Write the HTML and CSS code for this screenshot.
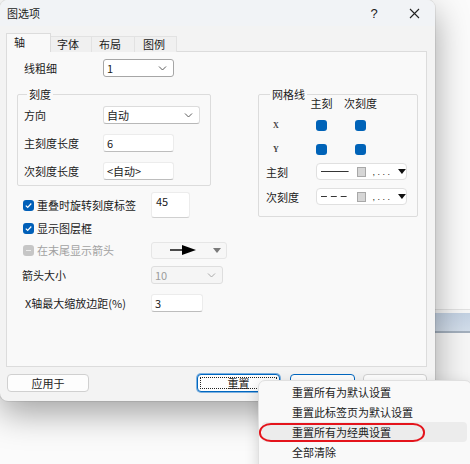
FILE: index.html
```html
<!doctype html>
<html lang="zh-CN">
<head>
	<meta charset="UTF-8">
	<title>图选项</title>
	<link rel="stylesheet" href="styles.css">
</head>
<body>
	<div class="desk">
		<!-- window behind the dialog -->
		<div class="backwin">
			<div class="backwin-bar"></div>
		</div>

		<div class="dialog">
			<div class="titlebar">
				<span class="title">图选项</span>
				<span class="help">?</span>
				<span class="close">
					<svg width="11" height="11" viewBox="0 0 11 11"><path d="M1 1L10 10M10 1L1 10" stroke="#222" stroke-width="1.1" fill="none"/></svg>
				</span>
			</div>

			<div class="tabs">
				<span class="tab active">轴</span>
				<span class="tab">字体</span>
				<span class="tab">布局</span>
				<span class="tab">图例</span>
			</div>

			<div class="panel">
				<div class="col-left">
					<div class="row row-top">
						<span class="lbl">线粗细</span>
						<div class="select dark w71"><span>1</span><svg class="chev" width="9" height="5" viewBox="0 0 9 5"><path d="M1 .5l3.5 3.5L8 .5" stroke="#5a5a5a" fill="none"/></svg></div>
					</div>

					<fieldset class="group scale">
						<legend>刻度</legend>
						<div class="row">
							<span class="lbl">方向</span>
							<div class="select w97"><span>自动</span><svg class="chev" width="9" height="5" viewBox="0 0 9 5"><path d="M1 .5l3.5 3.5L8 .5" stroke="#5a5a5a" fill="none"/></svg></div>
						</div>
						<div class="row">
							<span class="lbl">主刻度长度</span>
							<div class="input w71">6</div>
						</div>
						<div class="row">
							<span class="lbl">次刻度长度</span>
							<div class="input w71">&lt;自动&gt;</div>
						</div>
					</fieldset>

					<div class="opt opt-1">
						<label class="lbl chk"><span class="box on"><svg width="9" height="9" viewBox="0 0 9 9"><path d="M1.8 4.6l1.9 1.9 3.6-4" stroke="#fff" stroke-width="1.2" fill="none"/></svg></span>重叠时旋转刻度标签</label>
						<div class="input tall">45</div>
					</div>
					<div class="opt opt-2">
						<label class="lbl chk"><span class="box on"><svg width="9" height="9" viewBox="0 0 9 9"><path d="M1.8 4.6l1.9 1.9 3.6-4" stroke="#fff" stroke-width="1.2" fill="none"/></svg></span>显示图层框</label>
					</div>
					<div class="opt opt-3">
						<label class="lbl chk off"><span class="box dis"><i></i></span>在末尾显示箭头</label>
						<div class="arrowbox">
							<svg width="26" height="10" viewBox="0 0 26 10"><path d="M0 5H14" stroke="#000" stroke-width="1.4"/><path d="M12 0L26 5L12 10Z" fill="#000"/></svg>
							<svg class="tri" width="8" height="5" viewBox="0 0 8 5"><path d="M0 0H8L4 5Z" fill="#7a7a7a"/></svg>
						</div>
					</div>
					<div class="opt opt-4">
						<span class="lbl">箭头大小</span>
						<div class="select disabled w72"><span>10</span><svg class="chev" width="9" height="5" viewBox="0 0 9 5"><path d="M1 .5l3.5 3.5L8 .5" stroke="#a8a8a8" fill="none"/></svg></div>
					</div>
					<div class="opt opt-5">
						<span class="lbl pad">X轴最大缩放边距(%)</span>
						<div class="input w52">3</div>
					</div>
				</div>

				<fieldset class="group gridlines">
					<legend>网格线</legend>
					<div class="gl">
						<span></span>
						<span class="head"><b>主刻</b></span>
						<span class="head"><b>次刻度</b></span>

						<span class="axis">X</span>
						<span class="dot"></span>
						<span class="dot"></span>

						<span class="axis">Y</span>
						<span class="dot"></span>
						<span class="dot"></span>

						<span>主刻</span>
						<div class="combo">
							<svg width="28" height="3" viewBox="0 0 28 3"><path d="M0 1.5H28" stroke="#333"/></svg>
							<span class="swatch"></span>
							<span class="dots">, . . .</span>
							<svg width="8" height="5" viewBox="0 0 8 5"><path d="M0 0H8L4 5Z" fill="#111"/></svg>
						</div>

						<span>次刻度</span>
						<div class="combo">
							<svg width="28" height="3" viewBox="0 0 28 3"><path d="M0 1.5H28" stroke="#333" stroke-dasharray="6 4"/></svg>
							<span class="swatch"></span>
							<span class="dots">, . . .</span>
							<svg width="8" height="5" viewBox="0 0 8 5"><path d="M0 0H8L4 5Z" fill="#111"/></svg>
						</div>
					</div>
				</fieldset>
			</div>

			<!-- the last two buttons sit under the popup menu -->
			<div class="buttons">
				<span class="btn w82">应用于</span>
				<span class="btn focus w83">重置</span>
				<span class="btn default w65"></span>
				<span class="btn w64"></span>
			</div>
		</div>

		<div class="menu">
			<div class="item">重置所有为默认设置</div>
			<div class="item">重置此标签页为默认设置</div>
			<div class="item hot">重置所有为经典设置<span class="ring"></span></div>
			<div class="item">全部清除</div>
		</div>
	</div>
</body>
</html>
```

FILE: styles.css
```css
body{
	margin:0;
	background:#fafafa;
	font-family:"Noto Sans CJK SC","Microsoft YaHei",sans-serif;
	font-size:11px;
	color:#1b1b1b;
}
*{
	box-sizing:border-box;
}
.desk{
	position:relative;
	width:470px;
	height:464px;
	overflow:hidden;
	background:#fbfbfb;
}

/* window behind */
.backwin{
	position:absolute;
	left:400px;
	top:309px;
	width:80px;
	height:160px;
	background:#f6f6f6;
	border-top:1px solid #e2e2e2;
}
.backwin-bar{
	margin-top:3px;
	height:20px;
	background:linear-gradient(#c3d1e2,#d2ddea);
	border-bottom:2px solid #a3afbd;
}

/* dialog */
.dialog{
	position:relative;
	z-index:1;
	width:435px;
	height:401px;
	background:#f3f3f3;
	border-radius:8px;
	box-shadow:0 12px 34px rgba(0,0,0,.36),0 0 0 1px rgba(0,0,0,.07);
}
.titlebar{
	display:flex;
	align-items:center;
	height:26px;
	padding:0 11px 0 7px;
	background:#f1f3f6;
	border-radius:8px 8px 0 0;
}
.help{
	margin-left:auto;
	width:20px;
	text-align:center;
	font-family:"Liberation Sans",sans-serif;
	font-size:13px;
}
.close{
	width:20px;
	margin-left:20px;
	display:flex;
	justify-content:center;
}
.tabs{
	display:flex;
	align-items:flex-end;
	height:26px;
	padding:7px 0 0 6px;
	margin-bottom:-1px;
	position:relative;
	z-index:1;
}
.tab{
	height:16px;
	padding-left:7px;
	line-height:15px;
	background:#f0f0f0;
	border:1px solid #e2e2e2;
	border-bottom:none;
	border-left:none;
}
.tab:nth-child(2){width:41px;padding-left:6px;}
.tab:nth-child(3){width:43px;}
.tab:nth-child(4){width:42px;padding-left:8px;}
.tab.active{
	width:45px;
	height:19px;
	line-height:17px;
	background:#f9f9f9;
	border:1px solid #dcdcdc;
	border-bottom:none;
}
.panel{
	display:flex;
	margin-left:6px;
	width:421px;
	height:316px;
	padding-top:7px;
	background:#f9f9f9;
	border:1px solid #dcdcdc;
}

/* left column */
.col-left{
	width:241px;
	padding-left:10px;
}
.row{
	display:flex;
	align-items:center;
	height:18px;
}
.row-top{
	padding-left:7px;
}
.lbl{
	width:79px;
	flex:none;
}
.group{
	margin:0;
	border:1px solid #dcdcdc;
	border-radius:2px;
}
.group legend{
	padding:0 2px;
	line-height:12px;
}
.scale{
	margin-top:11px;
	width:194px;
	padding:6px 0 5px 6px;
}
.scale legend{
	margin-left:3px;
}
.scale .row + .row{
	margin-top:10px;
}
.select{
	display:flex;
	align-items:center;
	justify-content:space-between;
	height:18px;
	padding:0 6px 0 3px;
	background:#fff;
	border:1px solid #dcdcdc;
	border-bottom-color:#b8b8b8;
	border-radius:3px;
}
.select.dark{
	border-color:#a6a6a6;
}
.select.disabled{
	background:#f5f5f5;
	border-color:#dedede;
	color:#9c9c9c;
}
.input{
	height:18px;
	padding-left:3px;
	line-height:16px;
	background:#fff;
	border:1px solid #ececec;
	border-bottom-color:#bdbdbd;
	border-radius:3px;
}
.w52{width:52px;}
.w71{width:71px;}
.w72{width:72px;}
.w97{width:97px;}

.opt{
	display:flex;
	align-items:center;
	height:18px;
	padding-left:5px;
}
.opt .lbl{
	width:129px;
}
.opt-1{height:26px;margin-top:6px;}
.opt-2{margin-top:1px;}
.opt-3{margin-top:4px;}
.opt-4{margin-top:7px;}
.opt-5{margin-top:10px;}
.lbl.pad{
	padding-left:3px;
}
.input.tall{
	width:39px;
	height:26px;
	padding:1px 4px;
	line-height:14px;
	border-bottom-color:#d0d0d0;
}
.chk{
	display:flex;
	align-items:center;
}
.box{
	width:11px;
	height:11px;
	margin:0 3px 0 1px;
	border-radius:3px;
	display:flex;
	align-items:center;
	justify-content:center;
}
.box.on{
	background:#005fb8;
}
.box.dis{
	background:#c6c6c6;
}
.box.dis i{
	width:5px;
	height:1px;
	background:#ececec;
}
.chk.off{
	color:#a2a2a2;
}
.arrowbox{
	display:flex;
	align-items:center;
	width:76px;
	height:17px;
	padding:0 5px 0 18px;
	background:#f7f7f7;
	border:1px solid #e6e6e6;
	border-radius:3px;
}
.arrowbox .tri{
	margin-left:auto;
}

/* grid lines group */
.gridlines{
	margin:29px 0 0 10px;
	width:160px;
	height:129px;
	padding:0 0 0 7px;
}
.gridlines legend{
	margin-left:4px;
}
.gl{
	display:grid;
	grid-template-columns:50px 39px 52px;
	grid-template-rows:14px 30px 18px 27px 23px;
	align-items:center;
	margin-top:-4px;
}
.head{
	width:11px;
	display:flex;
	justify-content:center;
	white-space:nowrap;
}
.head b{
	font-weight:normal;
}
.axis{
	padding-left:7px;
	font-family:"Liberation Serif",serif;
	font-size:8px;
	font-weight:bold;
	color:#444;
}
.dot{
	width:11px;
	height:11px;
	background:#0063b8;
	border-radius:3px;
}
.combo{
	grid-column:2 / 4;
	display:flex;
	align-items:center;
	height:17px;
	padding-left:4px;
	background:#fff;
	border:1px solid #e0e0e0;
	border-radius:4px;
}
.swatch{
	width:10px;
	height:10px;
	margin:0 6px 0 8px;
	background:#d6d6d6;
	border:1px solid #a8a8a8;
}
.dots{
	width:26px;
	white-space:nowrap;
	font-family:"Liberation Sans",sans-serif;
	font-size:9px;
	line-height:10px;
}

/* bottom buttons */
.buttons{
	display:flex;
	padding:7px 8px 0 7px;
}
.btn{
	position:relative;
	height:18px;
	line-height:16px;
	text-align:center;
	background:#fdfdfd;
	border:1px solid #d0d0d0;
	border-radius:4px;
}
.w82{width:82px;}
.w83{width:83px;margin-left:auto;}
.w65{width:65px;margin-left:10px;}
.w64{width:64px;margin-left:8px;}
.btn.default{
	border-color:#0067c0;
}
.btn.focus{
	border-color:#0067c0;
	box-shadow:0 0 0 1px #7eb1e0;
}
.btn.focus::after{
	content:"";
	position:absolute;
	left:2px;
	top:2px;
	right:2px;
	bottom:2px;
	border:1px dotted #222;
}

/* popup menu */
.menu{
	position:absolute;
	z-index:2;
	left:258px;
	top:380px;
	width:214px;
	height:92px;
	padding-top:1px;
	background:#f9f9f9;
	border:1px solid #e0e0e0;
	border-radius:7px;
	box-shadow:0 4px 14px rgba(0,0,0,.16);
}
.item{
	position:relative;
	height:20px;
	line-height:20px;
	margin:0 4px 0 3px;
	padding-left:30px;
	border-radius:4px;
}
.item.hot{
	background:#ececec;
}
.ring{
	position:absolute;
	left:-3px;
	top:1px;
	width:166px;
	height:19px;
	border:2px solid #e4141c;
	border-radius:12px / 9px;
}
```
